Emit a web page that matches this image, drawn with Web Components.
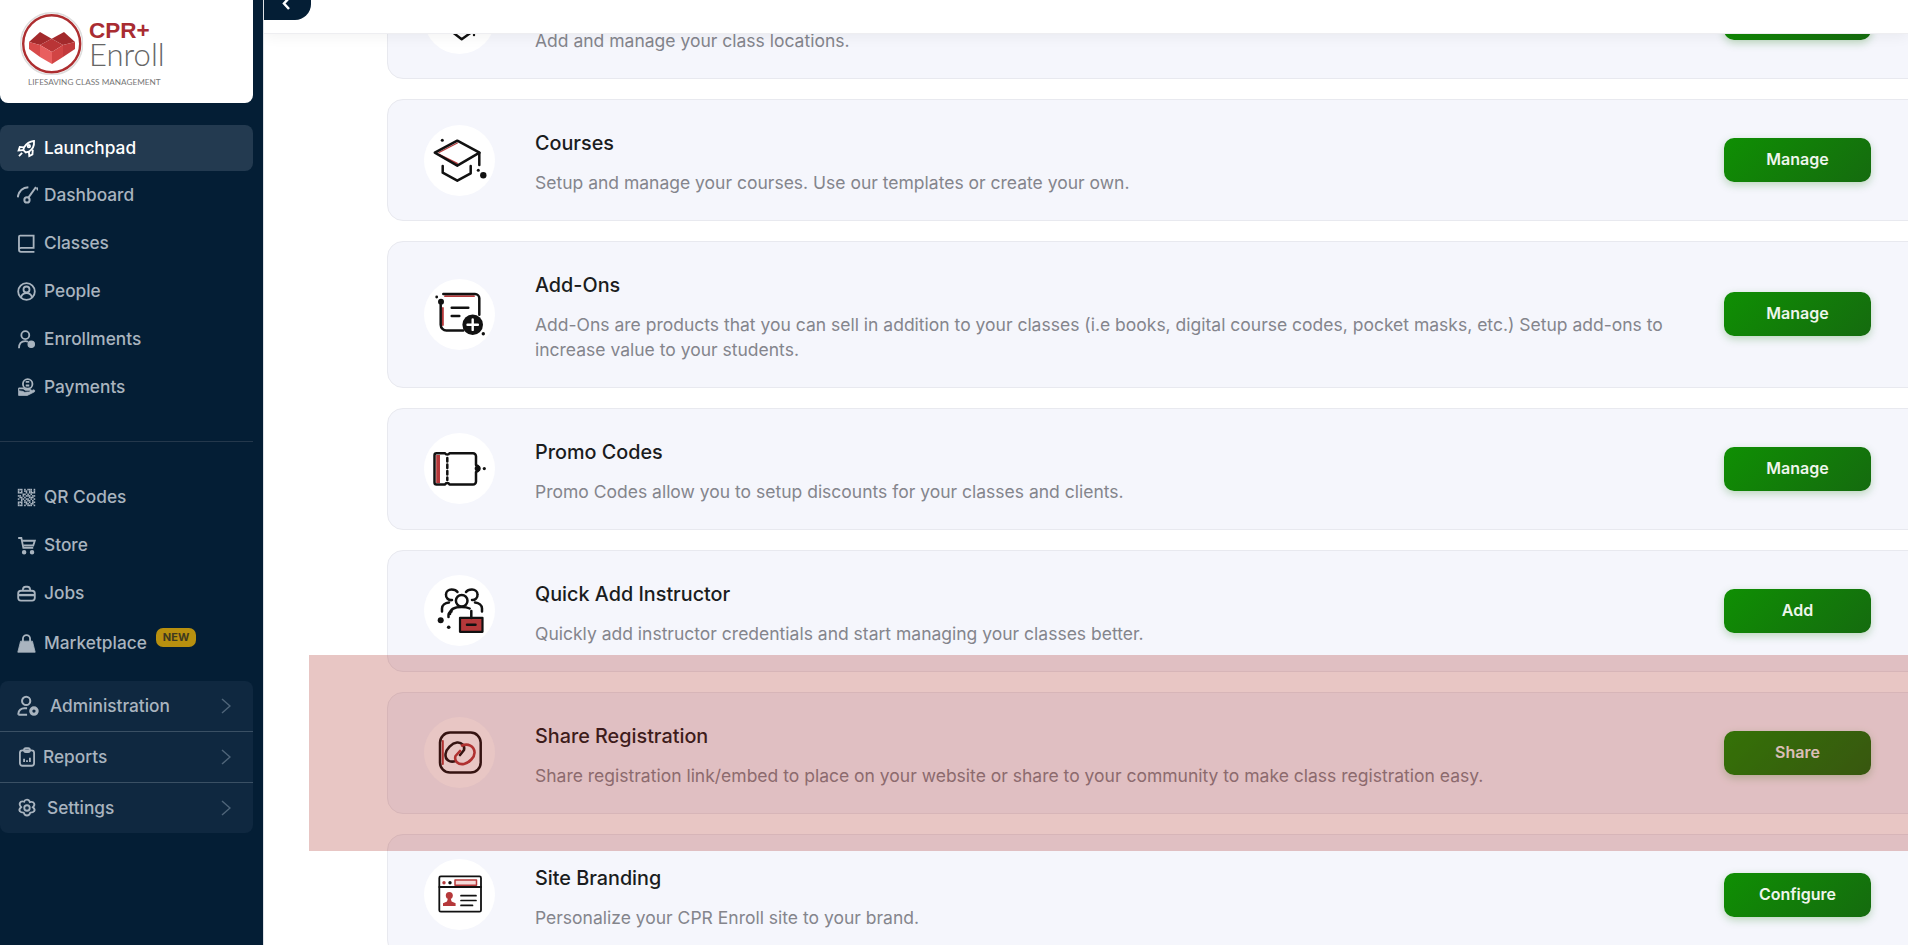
<!DOCTYPE html>
<html>
<head>
<meta charset="utf-8">
<title>Launchpad</title>
<style>
    html, body { margin: 0; height: 100%; overflow: hidden; background: #fff; }
    body { display: flex; font-family: Inter, "Liberation Sans", sans-serif; }
</style>
</head>
<body>

<side-bar>
    <logo-box></logo-box>
    <nav-item icon="rocket" active>Launchpad</nav-item>
    <nav-item icon="gauge" size="21">Dashboard</nav-item>
    <nav-item icon="book">Classes</nav-item>
    <nav-item icon="people">People</nav-item>
    <nav-item icon="enroll">Enrollments</nav-item>
    <nav-item icon="pay">Payments</nav-item>
    <nav-divider></nav-divider>
    <nav-item icon="qr">QR Codes</nav-item>
    <nav-item icon="cart">Store</nav-item>
    <nav-item icon="jobs">Jobs</nav-item>
    <nav-item icon="bag" badge="NEW" style="margin-top:2px">Marketplace</nav-item>
    <nav-group>
        <group-row icon="admin" gap="11" size="22">Administration</group-row>
        <group-row icon="report" gap="6" size="20">Reports</group-row>
        <group-row icon="gear" gap="10" size="20">Settings</group-row>
    </nav-group>
</side-bar>

<main-pane>
    <action-card picture="pin" desc="Add and manage your class locations." button="Manage"></action-card>
    <action-card picture="cap" heading="Courses" desc="Setup and manage your courses. Use our templates or create your own." button="Manage"></action-card>
    <action-card picture="addon" heading="Add-Ons" desc="Add-Ons are products that you can sell in addition to your classes (i.e books, digital course codes, pocket masks, etc.) Setup add-ons to increase value to your students." button="Manage"></action-card>
    <action-card picture="ticket" heading="Promo Codes" desc="Promo Codes allow you to setup discounts for your classes and clients." button="Manage"></action-card>
    <action-card picture="instructor" heading="Quick Add Instructor" desc="Quickly add instructor credentials and start managing your classes better." button="Add"></action-card>
    <action-card picture="link" heading="Share Registration" desc="Share registration link/embed to place on your website or share to your community to make class registration easy." button="Share"></action-card>
    <action-card picture="site" heading="Site Branding" desc="Personalize your CPR Enroll site to your brand." button="Configure"></action-card>
</main-pane>

<script>
// small sidebar icons, 24 box
const navIcons = {
    rocket: `<path d="M21.500 2.500c-5 .5-9.500 3-12.500 8l-1 3.500 3 3 4-1c5-3 7-7.500 6.500-13.500z"/><path d="M9 10.500L3.500 10 2 14.500l6-.5"/><path d="M15 16l.5 5.500 4-2 .5-6"/><circle cx="15" cy="9" r="1.500"/><path d="M2.500 21.500l4-4"/>`,
    gauge: `<path d="M.8 14C2 7 6 3 13 2.500"/><path d="M22.700 3l1.300 3"/><path d="M12.600 14.900L21.700 2.300"/><circle cx="11.400" cy="17.100" r="3"/>`,
    book: `<path d="M2.500 20V3.500A1.500 1.500 0 0 1 4 2h17v15.500H5a2.500 2.500 0 0 0 0 5h17"/>`,
    people: `<circle cx="12" cy="12" r="10.500"/><circle cx="12" cy="9.500" r="3.800"/><path d="M5 19.500c1-4 4-5.500 7-5.500s6 1.500 7 5.500"/>`,
    enroll: `<circle cx="10.500" cy="6.500" r="5"/><path d="M2.500 23c0-6 3.500-9 8-9 1.500 0 2.500.3 3.500.8"/><circle cx="18" cy="18" r="4" fill="currentColor" stroke-width="1.500"/>`,
    pay: `<circle cx="13.500" cy="7.500" r="6"/><path d="M11 5h4.500M11 9.500h4.500"/><path d="M2 13h6l3 2h5.500a1.800 1.800 0 0 1 0 3.500H12" /><path d="M2 13v9h11l9-4.500c1-1.500 0-3-1.500-2.500L15 18H9l-1-1-6-1z" fill="currentColor" stroke-width="1"/>`,
    cart: `<path d="M1.500 2.500h4L8 15h12.500"/><path d="M6.500 6h16l-2 6H8"/><circle cx="9" cy="20.500" r="1.700" fill="currentColor"/><circle cx="19" cy="20.500" r="1.700" fill="currentColor"/>`,
    jobs: `<path d="M7.500 8.500V6.500a3.500 3.500 0 0 1 3.500-3h2a3.500 3.500 0 0 1 3.500 3v2"/><rect x="1.500" y="8.500" width="21" height="12.500" rx="3.500" /><path d="M1.500 14h21" stroke-width="3"/>`,
    bag: `<path d="M7.500 10V6a4.500 4.500 0 0 1 9 0v4" /><path d="M4.500 9h15L23 23H1z" fill="currentColor" stroke-width="1"/>`,
    admin: `<circle cx="10" cy="6.500" r="4.500"/><path d="M1.500 21.500v-1c0-3.500 3-6 6.500-6h3"/><path d="M1.500 21.500H11"/><circle cx="18.500" cy="17.500" r="3.500" stroke-width="3.400"/>`,
    report: `<rect x="3.500" y="4" width="17" height="18.500" rx="3"/><rect x="8.500" y="1.500" width="7" height="4.500" rx="2"/><path d="M8.500 18v-4M12 18v-2M15.500 18v-5"/>`,
    gear: `<path d="M12 2c2 0 3 1.500 3.500 3 1.500-.5 4-.5 5 1.500s-.2 3.500-1.500 4.500c1.300 1 3 3 1.500 5-1 1.500-3 1.500-4.500 1.500-.5 2-2 3.500-4 3.500s-3.500-1.500-4-3.500c-1.500 0-3.500 0-4.500-1.500-1.500-2 .2-4 1.500-5C3.700 9.500 2.500 8 3.500 6s3.500-2 5-1.500C9 3 10 2 12 2z"/><circle cx="12" cy="12" r="3.300"/>`
};

// qr glyph is a block pattern so it gets built from little rects
function qrCells() {
    const rows = [
        "11101011101",
        "10101101101",
        "11100101111",
        "00011010100",
        "11010111011",
        "01101001110",
        "10110110101",
        "00101011010",
        "11101101011",
        "10100110110",
        "11101011101"
    ];
    let out = "";
    rows.forEach((row, y) => {
        [...row].forEach((c, x) => {
            if (c === "1") out += `<rect x="${1 + x * 2}" y="${1 + y * 2}" width="2" height="2" fill="currentColor" stroke="none"/>`;
        });
    });
    return out;
}
navIcons.qr = qrCells();

// round card pictures, 71 box. coordinates read off the reference
const red = "#b5383a";
const cardIcons = {
    pin: `<path d="M23 38l7 12.300 7.700 6 8.300-6 6-12" /><circle cx="50" cy="52" r="1.200" fill="#111" stroke="none"/>`,
    cap: `<path d="M15 27.500L33.300 18" stroke="${red}" stroke-width="1.400"/><path d="M15 29.500L33.300 38.500" stroke="${red}" stroke-width="1.400"/>
        <path d="M10.800 27.700L33.300 15.700 55.500 27.700 33.300 40.700z"/>
        <path d="M18.700 41v6.700L33.300 55.700 46.700 48.300V41"/><path d="M55.300 28v12"/>
        <circle cx="59.300" cy="50.300" r="3.200" fill="#111" stroke="none"/><circle cx="54.300" cy="45.300" r="1.500" fill="#111" stroke="none"/><circle cx="18.300" cy="15.300" r="1.500" fill="#111" stroke="none"/>`,
    addon: `<path d="M21 17.200h29" stroke="${red}" stroke-width="1.800"/><path d="M18.900 29v17" stroke="${red}" stroke-width="1.800"/>
        <path d="M16.700 25.700v20a5.700 5.700 0 0 0 6 5.700H39.300"/><path d="M19.300 15H51a4.300 4.300 0 0 1 4.300 4.300V35.700"/>
        <path d="M27.700 28.700h16.600M27.700 37h7.600"/>
        <circle cx="48.700" cy="45.700" r="10.300" fill="#111" stroke="none"/><path d="M48.700 40.500v10.400M43.500 45.700h10.400" stroke="#fff" stroke-width="2.400"/>
        <circle cx="17" cy="22.700" r="3" fill="#111" stroke="none"/><circle cx="12.700" cy="18" r="1.400" fill="#111" stroke="none"/><circle cx="59.300" cy="54.700" r="1.700" fill="#111" stroke="none"/>`,
    ticket: `<rect x="12.200" y="22" width="3.800" height="28" fill="${red}" stroke="none"/>
        <path d="M12.500 20.200H21a2.500 2.500 0 0 0 4.500 0H49a3 3 0 0 1 3 3V32a3.600 3.600 0 0 1 0 7v9.500a3 3 0 0 1-3 3H25.500a2.500 2.500 0 0 0-4.500 0H12.500a2 2 0 0 1-2-2V22.200a2 2 0 0 1 2-2z"/>
        <path d="M23.300 25v22" stroke-dasharray="3.500 3"/><circle cx="53.700" cy="35.600" r="3" fill="#111" stroke="none"/><circle cx="60.300" cy="35.600" r="1.600" fill="#111" stroke="none"/>`,
    instructor: `<circle cx="37.700" cy="25.700" r="5.800"/><path d="M26 39c0-5 5-7 11.700-7 3 0 6 .5 8 1.500"/>
        <path d="M28 25a5 5 0 0 1-6-5.500c0-3 2.500-5 5.500-5s5 1 6 2.500"/><path d="M42 17c1-1.500 3-2.500 6-2.500s5.500 2 5.500 5A5 5 0 0 1 48 25"/>
        <path d="M18 36.500v-3c0-3 3-5.500 7-6"/><path d="M51 27.500c4 .5 7 3 7 6v3"/><path d="M24.500 42v-2c0-2 1.500-3.500 3-3.500"/>
        <rect x="36" y="42.800" width="22.500" height="14" fill="${red}" stroke-width="2.200"/><path d="M47.300 36v7" /><path d="M43 49.800h8.500"/>
        <circle cx="16.700" cy="45.300" r="3" fill="#111" stroke="none"/><circle cx="24.700" cy="52.300" r="1.800" fill="#111" stroke="none"/>`,
    link: `<path d="M18.800 24v23" stroke="${red}" stroke-width="2"/><rect x="16" y="15.600" width="40.700" height="40" rx="10"/>
        <path d="M31.500 44C26 46 21 43 21.500 37 22 32 28 26 33 25.500 38 25 41 29 40 33L36 38" stroke-width="2.600"/>
        <path d="M38 28.500C44 26 50 29 50.500 35 51 40 45 46 40 47 34 48 30 44 31.500 39L36 34" stroke="${red}" stroke-width="2.600"/>`,
    site: `<rect x="15.300" y="17.400" width="41.700" height="35.300" rx="1.500" stroke-width="1.800"/><path d="M15.300 28h41.700" stroke-width="1.800"/>
        <circle cx="20" cy="23.700" r="1.700" fill="${red}" stroke="none"/><circle cx="26" cy="23.700" r="1.700" fill="#111" stroke="none"/>
        <rect x="31" y="20.900" width="21.500" height="5.300" fill="#f4d9d8" stroke="${red}" stroke-width="1.500"/>
        <circle cx="25.300" cy="36.500" r="3.500" fill="${red}" stroke="none"/><path d="M24 39h2.600l1 3.500 4 1.800V47H19v-2.700l4-1.800z" fill="${red}" stroke="none"/>
        <path d="M37 36.700h15M37 41.500h15M37 46.400h11.500" stroke-width="1.700"/>`
};

class SideBar extends HTMLElement {
    constructor() {
        super();
        this.attachShadow({mode: "open"}).innerHTML = `
        <style>
            :host { display: block; flex: none; width: 264px; height: 100%; background: #041e35; box-sizing: border-box; padding-right: 10px; border-right: 1px solid #dfe2e6; color: #a9b4bf; }
        </style>
        <slot></slot>`;
    }
}

class LogoBox extends HTMLElement {
    constructor() {
        super();
        this.attachShadow({mode: "open"}).innerHTML = `
        <style>
            :host { display: block; height: 103px; margin-bottom: 22px; background: #fff; border-radius: 0 0 8px 8px; box-sizing: border-box; padding: 11px 0 0 19px; }
            .top { display: flex; gap: 6px; }
            svg { width: 64px; height: 64px; flex: none; }
            .cpr { font: 700 22.500px/20px "Liberation Sans", sans-serif; color: #a92c32; margin-top: 10px; }
            .enroll { font: 300 31px/26px Lato, sans-serif; color: #666; }
            .sub { font: 400 8.200px/10px Lato, sans-serif; color: #777; margin: 2px 0 0 9px; white-space: nowrap; }
        </style>
        <div class="top">
            <svg viewBox="0 0 64 64">
                <circle cx="32.700" cy="32.700" r="31" fill="#fff" stroke="#ddd" stroke-width="1.500"/>
                <circle cx="32.700" cy="32.700" r="28.500" fill="#fff" stroke="#ad2e30" stroke-width="2.400"/>
                <path d="M21 21L32.700 27.700 21 34 10 31z" fill="#a32a2c"/>
                <path d="M45 21L56 31 44 34 32.700 27.700z" fill="#a32a2c"/>
                <path d="M32.700 27.700L44 34 33 41 21 34z" fill="#b93436"/>
                <path d="M10 31L21 34V46L10 38z" fill="#d84a4a"/>
                <path d="M21 34L33 41V53L21 46z" fill="#e95f5f"/>
                <path d="M33 41L44 34V46L33 53z" fill="#d14444"/>
                <path d="M44 34L56 31V38L44 46z" fill="#c23a3c"/>
            </svg>
            <div>
                <div class="cpr">CPR+</div>
                <div class="enroll">Enroll</div>
            </div>
        </div>
        <div class="sub">LIFESAVING CLASS MANAGEMENT</div>`;
    }
}

class NavItem extends HTMLElement {
    constructor() {
        super();
        const name = this.getAttribute("icon");
        const badge = this.getAttribute("badge");
        const size = Number(this.getAttribute("size")) || 19;
        this.attachShadow({mode: "open"}).innerHTML = `
        <style>
            :host { display: flex; align-items: center; height: 48px; box-sizing: border-box; padding-left: 17px; gap: 8px; font: 500 17.300px/20px Inter, sans-serif; color: #a9b4bf; }
            :host([active]) { height: 46px; background: #233a50; border-radius: 8px; color: #fff; }
            svg { width: ${size}px; height: ${size}px; margin-right: ${19 - size}px; flex: none; fill: none; stroke: currentColor; stroke-width: 2.300; }
            .badge { font: 700 11px/19px Inter, sans-serif; color: #3f3a1f; background: #b8900f; border-radius: 7px; padding: 0 7px; margin: -12px 0 0 1px; }
        </style>
        <svg viewBox="0 0 24 24">${navIcons[name]}</svg>
        <span><slot></slot></span>
        ${badge ? `<span class="badge">${badge}</span>` : ""}`;
    }
}

class NavDivider extends HTMLElement {
    constructor() {
        super();
        this.attachShadow({mode: "open"}).innerHTML = `
        <style>
            :host { display: block; height: 1px; background: #24384c; margin: 30px 0 31px; }
        </style>`;
    }
}

class NavGroup extends HTMLElement {
    constructor() {
        super();
        this.attachShadow({mode: "open"}).innerHTML = `
        <style>
            :host { display: block; margin-top: 14px; background: #0f2840; border-radius: 8px; overflow: hidden; }
        </style>
        <slot></slot>`;
    }
}

class GroupRow extends HTMLElement {
    constructor() {
        super();
        const name = this.getAttribute("icon");
        const gap = this.getAttribute("gap");
        const size = this.getAttribute("size");
        this.attachShadow({mode: "open"}).innerHTML = `
        <style>
            :host { display: flex; align-items: center; height: 51px; box-sizing: border-box; padding: 0 22px 0 17px; font: 500 17.300px/20px Inter, sans-serif; color: #a9b4bf; border-bottom: 1px solid #3a5064; }
            :host(:last-child) { border-bottom: 0; height: 50px; }
            svg.i { width: ${size}px; height: ${size}px; flex: none; fill: none; stroke: currentColor; stroke-width: 2.200; margin-right: ${gap}px; }
            span { flex: 1; }
            svg.c { width: 10px; height: 16px; flex: none; fill: none; stroke: #4e6478; stroke-width: 1.500; }
        </style>
        <svg class="i" viewBox="0 0 24 24">${navIcons[name]}</svg>
        <span><slot></slot></span>
        <svg class="c" viewBox="0 0 10 16"><path d="M1 1l8 7-8 7"/></svg>`;
    }
}

class MainPane extends HTMLElement {
    constructor() {
        super();
        this.attachShadow({mode: "open"}).innerHTML = `
        <style>
            :host { display: flex; flex-direction: column; flex: 1; min-width: 0; height: 100%; position: relative; overflow: hidden; }
            .bar { flex: none; height: 33px; background: #fff; border-bottom: 1px solid #eeeef1; box-shadow: 0 3px 14px rgba(0,0,0,.05); position: relative; z-index: 3; }
            .tab { position: absolute; left: 0; top: 0; width: 47px; height: 20px; background: #041e35; border-radius: 0 0 16px 0; z-index: 4; }
            .tab svg { position: absolute; left: 18px; top: -3px; width: 8px; height: 13px; fill: none; stroke: #fff; stroke-width: 2.500; }
            .scroll { flex: 1; min-height: 0; overflow: hidden; }
            .list { display: flex; flex-direction: column; gap: 20px; margin: -77px -20px 0 123px; }
            .shade { position: absolute; left: 45px; right: 0; top: 655px; height: 196px; background: rgba(164,26,20,.25); z-index: 2; }
        </style>
        <div class="bar"></div>
        <div class="tab"><svg viewBox="0 0 8 13"><path d="M7 1L2 6.500 7 12"/></svg></div>
        <div class="scroll"><div class="list"><slot></slot></div></div>
        <div class="shade"></div>`;
    }
}

class ActionCard extends HTMLElement {
    constructor() {
        super();
        const heading = this.getAttribute("heading");
        this.attachShadow({mode: "open"}).innerHTML = `
        <style>
            :host { display: flex; align-items: center; flex: none; box-sizing: border-box; background: #f5f6fc; border: 1px solid #e8e9ef; border-radius: 16px; padding: 0 56px 0 36px; }
            .pic { width: 71px; height: 71px; flex: none; border-radius: 50%; background: #fff; }
            .pic svg { display: block; width: 71px; height: 71px; fill: none; stroke: #111; stroke-width: 2.500; stroke-linecap: round; stroke-linejoin: round; }
            .text { flex: 1; min-width: 0; margin: 0 40px 0 40px; padding: 29px 0 24.500px; }
            h3 { margin: 0 0 14px; font: 500 19.800px/28px Inter, sans-serif; color: #1a1c20; min-height: 28px; }
            p { margin: 0; font: 400 17.500px/24.500px Inter, sans-serif; color: #84858c; }
            button { flex: none; width: 147px; height: 44px; border: 0; padding: 0 0 2px; border-radius: 10px; background: linear-gradient(135deg, #0f8f03, #156b0f); color: #eef5ec; font: 600 16px/20px Inter, sans-serif; box-shadow: 0 3px 8px rgba(15,120,5,.25); }
        </style>
        <div class="pic"><svg viewBox="0 0 71 71">${cardIcons[this.getAttribute("picture")]}</svg></div>
        <div class="text">
            <h3>${heading || ""}</h3>
            <p>${this.getAttribute("desc")}</p>
        </div>
        <button>${this.getAttribute("button")}</button>`;
    }
}

customElements.define("side-bar", SideBar);
customElements.define("logo-box", LogoBox);
customElements.define("nav-item", NavItem);
customElements.define("nav-divider", NavDivider);
customElements.define("nav-group", NavGroup);
customElements.define("group-row", GroupRow);
customElements.define("main-pane", MainPane);
customElements.define("action-card", ActionCard);
</script>
</body>
</html>
